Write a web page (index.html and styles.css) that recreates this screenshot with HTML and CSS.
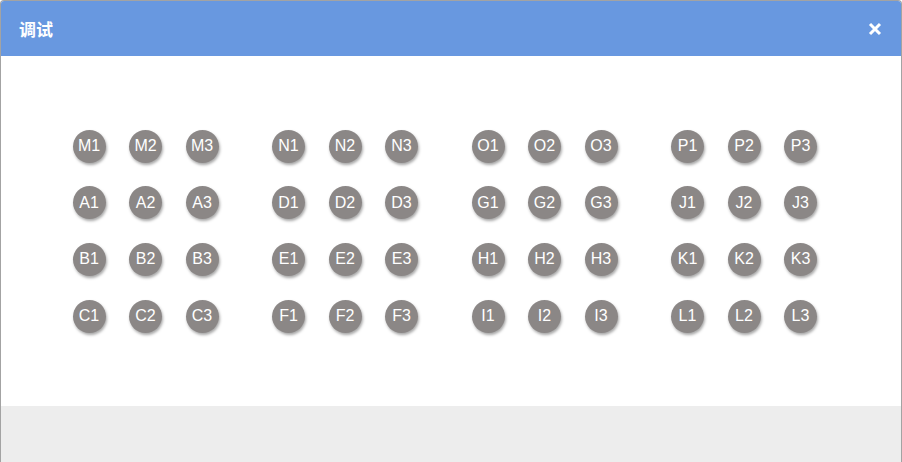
FILE: index.html
```html
<!DOCTYPE html>
<html>
<head>
<meta charset="utf-8">
<link rel="stylesheet" href="styles.css">
</head>
<body>
<div class="dialog">
  <div class="header">
    <span class="title">调试</span>
    <svg class="close" width="14" height="14" viewBox="0 0 14 14"><path d="M2 2 L12 12 M12 2 L2 12" stroke="#ffffff" stroke-width="3" stroke-linecap="butt" fill="none"/></svg>
  </div>
  <div class="content">
    <div class="groups">
      <div class="group">
        <span class="dot">M1</span><span class="dot">M2</span><span class="dot">M3</span>
        <span class="dot">A1</span><span class="dot">A2</span><span class="dot">A3</span>
        <span class="dot">B1</span><span class="dot">B2</span><span class="dot">B3</span>
        <span class="dot">C1</span><span class="dot">C2</span><span class="dot">C3</span>
      </div>
      <div class="group">
        <span class="dot">N1</span><span class="dot">N2</span><span class="dot">N3</span>
        <span class="dot">D1</span><span class="dot">D2</span><span class="dot">D3</span>
        <span class="dot">E1</span><span class="dot">E2</span><span class="dot">E3</span>
        <span class="dot">F1</span><span class="dot">F2</span><span class="dot">F3</span>
      </div>
      <div class="group">
        <span class="dot">O1</span><span class="dot">O2</span><span class="dot">O3</span>
        <span class="dot">G1</span><span class="dot">G2</span><span class="dot">G3</span>
        <span class="dot">H1</span><span class="dot">H2</span><span class="dot">H3</span>
        <span class="dot">I1</span><span class="dot">I2</span><span class="dot">I3</span>
      </div>
      <div class="group">
        <span class="dot">P1</span><span class="dot">P2</span><span class="dot">P3</span>
        <span class="dot">J1</span><span class="dot">J2</span><span class="dot">J3</span>
        <span class="dot">K1</span><span class="dot">K2</span><span class="dot">K3</span>
        <span class="dot">L1</span><span class="dot">L2</span><span class="dot">L3</span>
      </div>
    </div>
  </div>
  <div class="footer"></div>
</div>
</body>
</html>
```
FILE: styles.css
```css
html, body {
  margin: 0;
  padding: 0;
  background: #ffffff;
}
.dialog {
  box-sizing: border-box;
  width: 902px;
  height: 462px;
  border: 1px solid #a3a3a3;
  border-bottom: none;
  border-radius: 4px 4px 0 0;
  overflow: hidden;
  display: flex;
  flex-direction: column;
  font-family: "Liberation Sans", Arial, "Noto Sans CJK SC", sans-serif;
}
.header {
  height: 55px;
  flex: none;
  background: #6898e0;
  display: flex;
  align-items: center;
  justify-content: space-between;
  padding: 0 19px 0 18px;
  color: #ffffff;
}
.title {
  font-family: "Noto Sans CJK SC", sans-serif;
  font-weight: bold;
  font-size: 17px;
  line-height: 20px;
}
.close {
  display: block;
  margin-top: 1px;
}
.content {
  flex: none;
  height: 350px;
  background: #ffffff;
  box-sizing: border-box;
  padding: 73.5px 0 0 71.5px;
}
.groups {
  display: flex;
  gap: 53.5px;
}
.group {
  display: grid;
  grid-template-columns: repeat(3, 33px);
  grid-auto-rows: 33px;
  column-gap: 23.5px;
  row-gap: 23.7px;
}
.dot {
  width: 33px;
  height: 33px;
  border-radius: 50%;
  background: #8b8786;
  box-shadow: 1px 2px 3px rgba(0, 0, 0, 0.35);
  color: #ffffff;
  font-size: 16px;
  display: flex;
  align-items: center;
  justify-content: center;
}
.footer {
  flex: 1;
  background: #ededed;
}
```
